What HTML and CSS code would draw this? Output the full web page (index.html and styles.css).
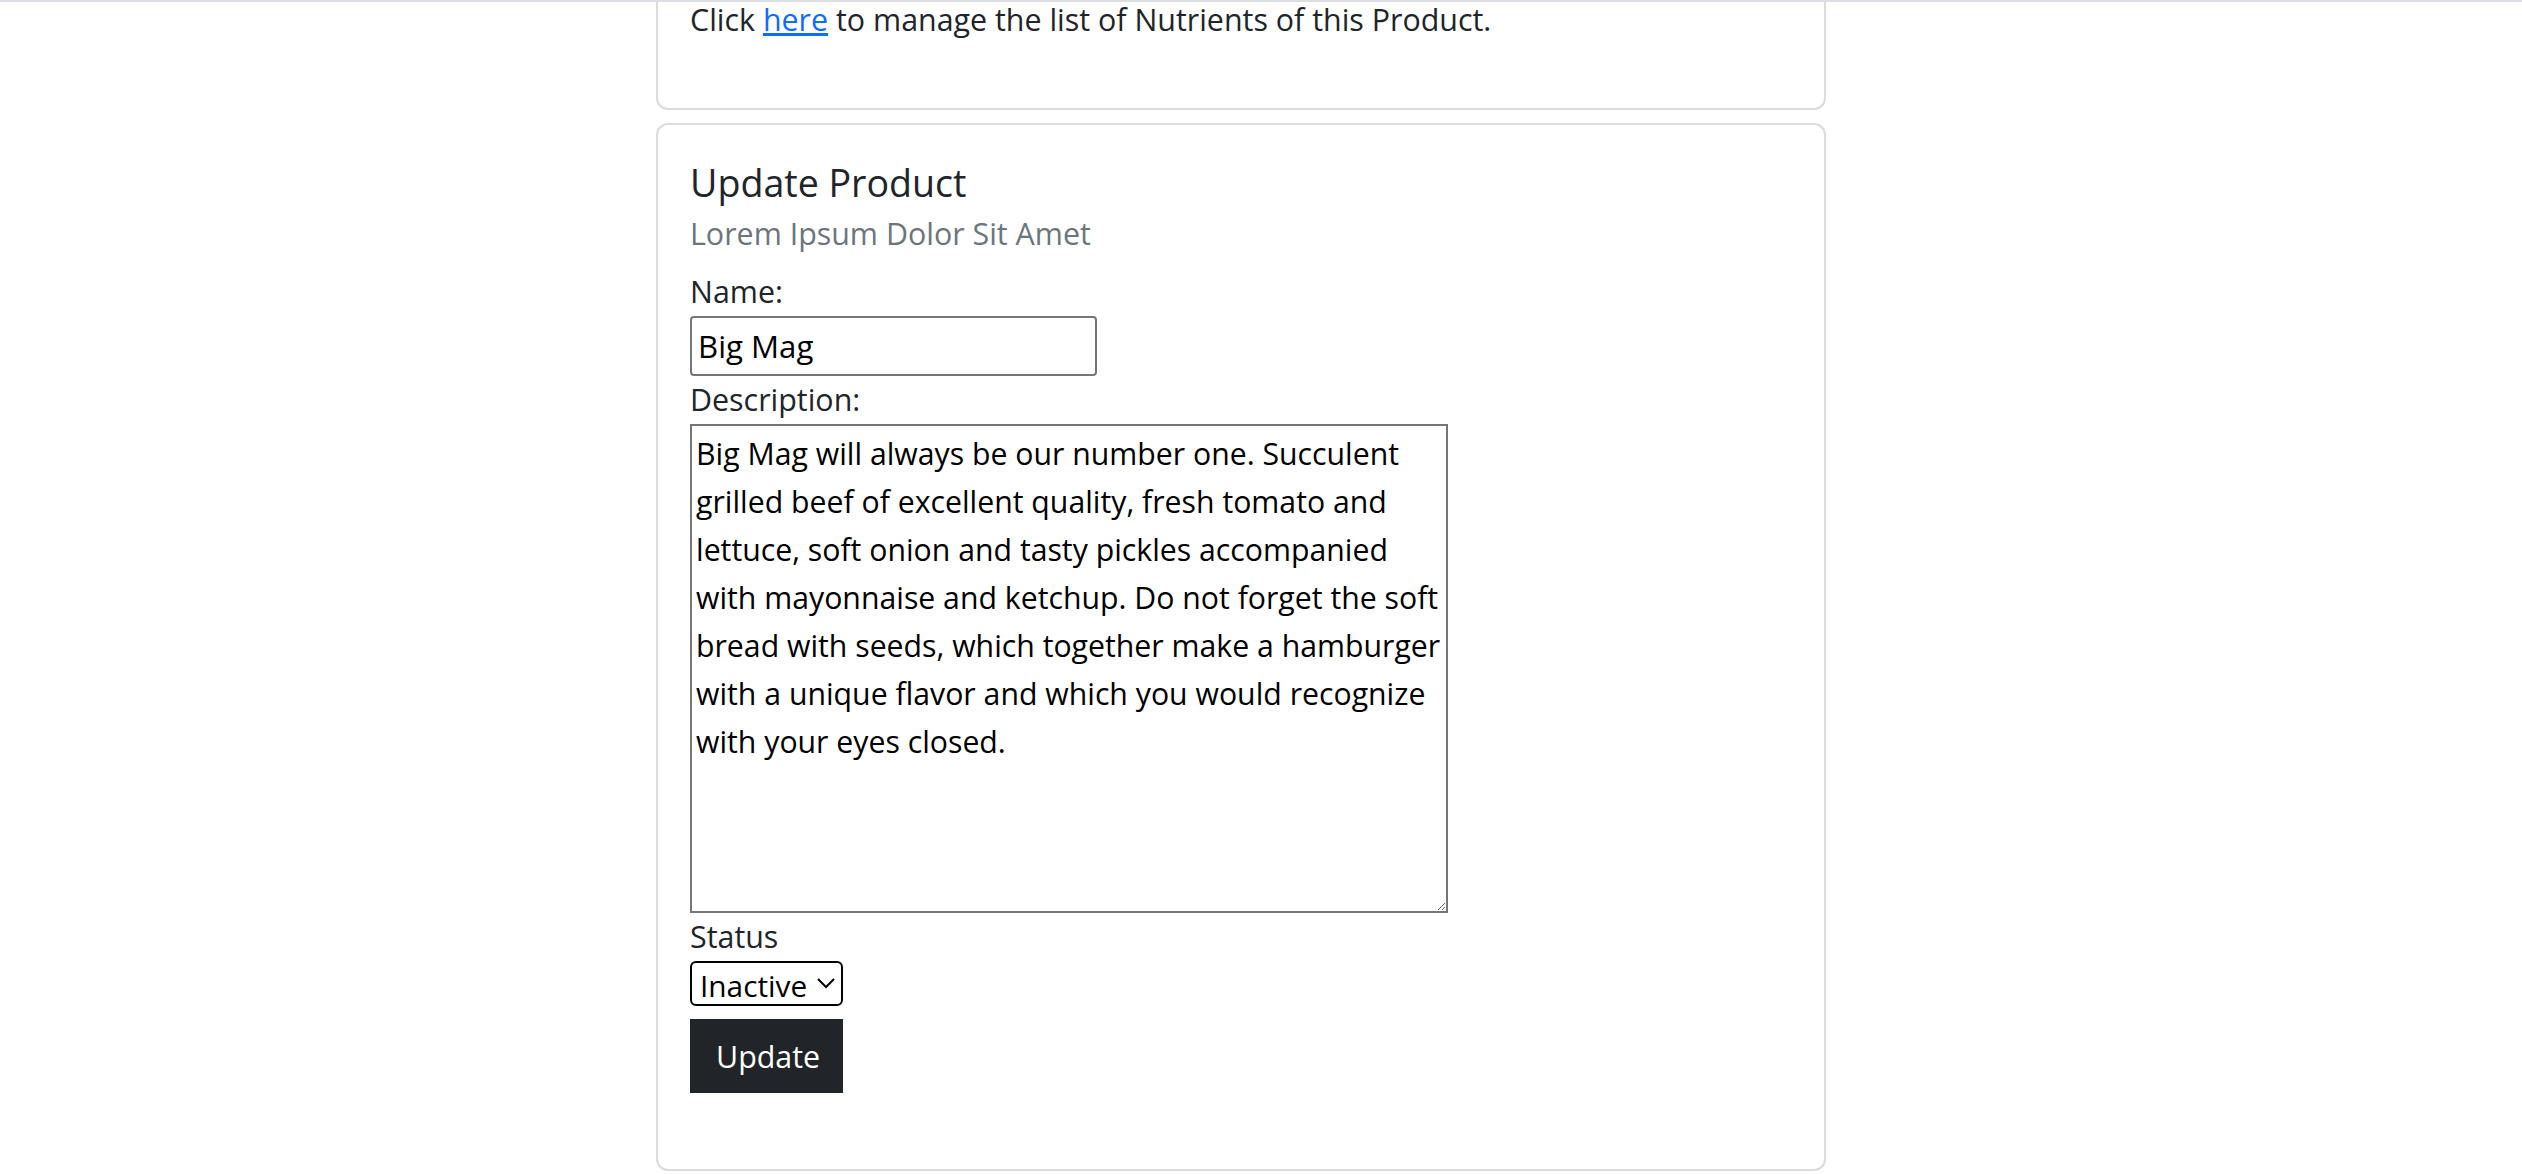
FILE: index.html
```html
<!DOCTYPE html>
<html lang="en">
<head>
<meta charset="utf-8">
<title>Update Product</title>
<link rel="stylesheet" href="styles.css">
</head>
<body>
<div class="topline"></div>
<main class="page">
  <section class="card card-first">
    <div class="card-body">
      <p class="card-text">Click <a href="#">here</a> to manage the list of Nutrients of this Product.</p>
    </div>
  </section>
  <section class="card card-form">
    <div class="card-body">
      <h5 class="card-title">Update Product</h5>
      <h6 class="card-subtitle">Lorem Ipsum Dolor Sit Amet</h6>
      <form class="form">
        <label class="label" for="name">Name:</label>
        <input class="input" id="name" type="text" value="Big Mag">
        <label class="label" for="desc">Description:</label>
        <textarea class="textarea" id="desc">Big Mag will always be our number one. Succulent grilled beef of excellent quality, fresh tomato and lettuce, soft onion and tasty pickles accompanied with mayonnaise and ketchup. Do not forget the soft bread with seeds, which together make a hamburger with a unique flavor and which you would recognize with your eyes closed.</textarea>
        <label class="label" for="status">Status</label>
        <select class="select" id="status">
          <option>Active</option>
          <option selected>Inactive</option>
        </select>
        <button type="submit" class="btn">Update</button>
      </form>
    </div>
  </section>
</main>
</body>
</html>
```

FILE: styles.css
```css
html {
  zoom: 2;
}

body {
  margin: 0;
  background: #fff;
  color: #212529;
  font-family: "Open Sans", "Noto Sans", sans-serif;
  font-size: 15.2px;
  line-height: 24px;
}

.topline {
  position: fixed;
  top: 0;
  left: 0;
  right: 0;
  height: 1px;
  background: #dcdfe2;
  z-index: 5;
}

.page {
  display: flex;
  flex-direction: column;
  padding-left: 328px;
}

.card {
  width: 585px;
  box-sizing: border-box;
  border: 1px solid rgba(0, 0, 0, 0.14);
  border-radius: 6px;
  background: #fff;
}

.card-first {
  margin-top: -19px;
}

.card-form {
  margin-top: 6.5px;
}

.card-body {
  padding: 16.8px 16px 16px;
}

.card-first .card-body {
  padding-top: 16px;
}

.card-text {
  margin: 0 0 16px;
}

.card-text a {
  color: #0d6efd;
  text-decoration: underline;
}

.card-title {
  margin: 0 0 8px;
  font-size: 18.8px;
  font-weight: 400;
  line-height: 24px;
}

.card-subtitle {
  margin: -4px 0 7.5px;
  font-size: 15.2px;
  font-weight: 400;
  line-height: 19.2px;
  color: #6c757d;
}

.form {
  display: flex;
  flex-direction: column;
  align-items: flex-start;
}

.label {
  display: block;
  line-height: 24px;
}

.input {
  box-sizing: border-box;
  width: 203.5px;
  height: 30px;
  margin: 0;
  padding: 2px 3px;
  border: 1px solid #767676;
  border-radius: 2px;
  font: inherit;
  font-size: 15.6px;
  line-height: 24px;
  color: #000;
}

.textarea {
  display: block;
  box-sizing: border-box;
  width: 379px;
  height: 244.5px;
  margin: 0;
  padding: 2px;
  border: 1px solid #767676;
  font: inherit;
  font-size: 15.12px;
  line-height: 24px;
  color: #000;
}

.select {
  box-sizing: border-box;
  width: 76.5px;
  height: 22.5px;
  margin: 0;
  border: 1px solid #000;
  border-radius: 3px;
  background-color: #fff;
  font: inherit;
  font-size: 14.9px;
  line-height: normal;
  color: #000;
}

.btn {
  box-sizing: border-box;
  width: 76.5px;
  height: 37px;
  margin: 6.5px 0 22.2px;
  padding: 6px 12px;
  border: 1px solid #212529;
  border-radius: 0;
  background: #212529;
  color: #fff;
  font: inherit;
  line-height: 24px;
  cursor: pointer;
}
```
